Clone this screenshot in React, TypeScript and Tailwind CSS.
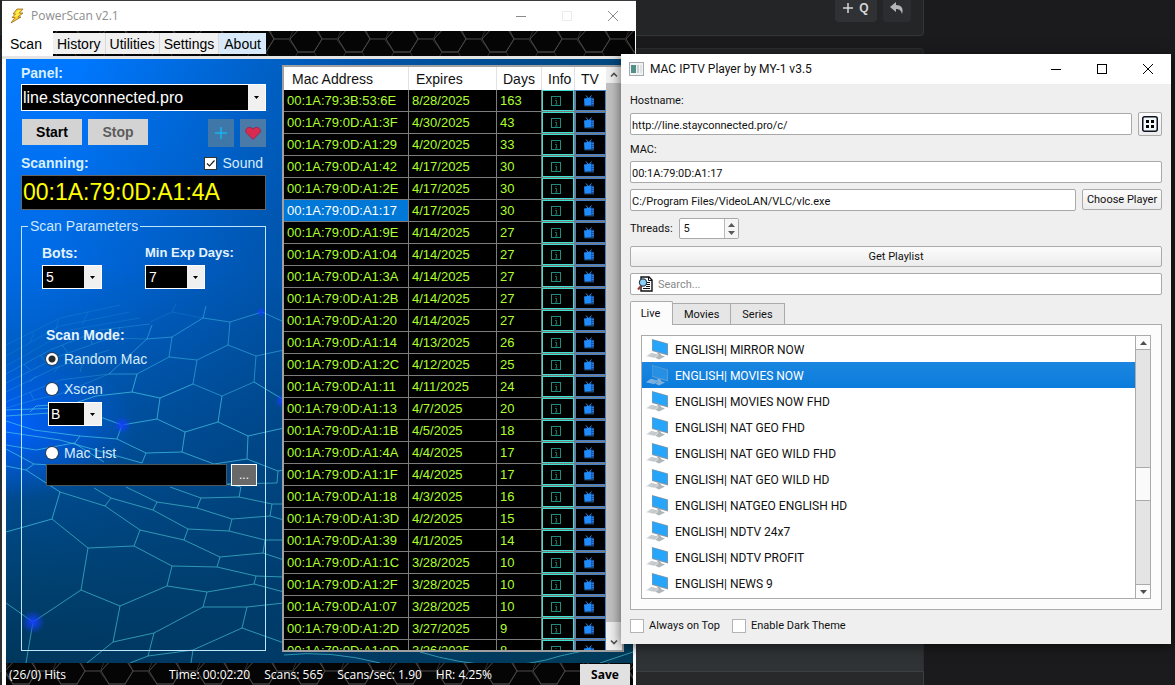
import { useId, useState } from 'react'
import type { ReactNode } from 'react'

interface Hit {
  mac: string
  expires: string
  days: number
}

const hits: Hit[] = [
  { mac: '00:1A:79:3B:53:6E', expires: '8/28/2025', days: 163 },
  { mac: '00:1A:79:0D:A1:3F', expires: '4/30/2025', days: 43 },
  { mac: '00:1A:79:0D:A1:29', expires: '4/20/2025', days: 33 },
  { mac: '00:1A:79:0D:A1:42', expires: '4/17/2025', days: 30 },
  { mac: '00:1A:79:0D:A1:2E', expires: '4/17/2025', days: 30 },
  { mac: '00:1A:79:0D:A1:17', expires: '4/17/2025', days: 30 },
  { mac: '00:1A:79:0D:A1:9E', expires: '4/14/2025', days: 27 },
  { mac: '00:1A:79:0D:A1:04', expires: '4/14/2025', days: 27 },
  { mac: '00:1A:79:0D:A1:3A', expires: '4/14/2025', days: 27 },
  { mac: '00:1A:79:0D:A1:2B', expires: '4/14/2025', days: 27 },
  { mac: '00:1A:79:0D:A1:20', expires: '4/14/2025', days: 27 },
  { mac: '00:1A:79:0D:A1:14', expires: '4/13/2025', days: 26 },
  { mac: '00:1A:79:0D:A1:2C', expires: '4/12/2025', days: 25 },
  { mac: '00:1A:79:0D:A1:11', expires: '4/11/2025', days: 24 },
  { mac: '00:1A:79:0D:A1:13', expires: '4/7/2025', days: 20 },
  { mac: '00:1A:79:0D:A1:1B', expires: '4/5/2025', days: 18 },
  { mac: '00:1A:79:0D:A1:4A', expires: '4/4/2025', days: 17 },
  { mac: '00:1A:79:0D:A1:1F', expires: '4/4/2025', days: 17 },
  { mac: '00:1A:79:0D:A1:18', expires: '4/3/2025', days: 16 },
  { mac: '00:1A:79:0D:A1:3D', expires: '4/2/2025', days: 15 },
  { mac: '00:1A:79:0D:A1:39', expires: '4/1/2025', days: 14 },
  { mac: '00:1A:79:0D:A1:1C', expires: '3/28/2025', days: 10 },
  { mac: '00:1A:79:0D:A1:2F', expires: '3/28/2025', days: 10 },
  { mac: '00:1A:79:0D:A1:07', expires: '3/28/2025', days: 10 },
  { mac: '00:1A:79:0D:A1:2D', expires: '3/27/2025', days: 9 },
  { mac: '00:1A:79:0D:A1:0D', expires: '3/26/2025', days: 8 },
]

const channels = [
  'MIRROR NOW',
  'MOVIES NOW',
  'MOVIES NOW FHD',
  'NAT GEO FHD',
  'NAT GEO WILD FHD',
  'NAT GEO WILD HD',
  'NATGEO ENGLISH HD',
  'NDTV 24x7',
  'NDTV PROFIT',
  'NEWS 9',
]

const scanTabs = ['Scan', 'History', 'Utilities', 'Settings', 'About']
const playerTabs = ['Live', 'Movies', 'Series']

/* ---------- drawings ---------- */

function Honeycomb() {
  const id = useId()
  return (
    <svg className="absolute inset-0 size-full" aria-hidden="true">
      <defs>
        <pattern id={id} width="48" height="42" patternUnits="userSpaceOnUse" x="-2" y="-12">
          <g fill="none" stroke="#4c4847" strokeWidth="1">
            <path d="M9 0L0 21L9 33H25L33 20L24 0" stroke="#2c2a2b" />
            <path d="M11 9L1 20L9 33H25L33 20L26 9" />
            <path d="M33 20H48" />
            <path d="M9 33L4 42M25 33L30 42" stroke="#2e2c2d" />
          </g>
        </pattern>
      </defs>
      <rect width="100%" height="100%" fill="#050505" />
      <rect width="100%" height="100%" fill={`url(#${id})`} />
    </svg>
  )
}

function Mesh() {
  return (
    <svg
      className="absolute inset-0 size-full"
      viewBox="6 59 627 604"
      preserveAspectRatio="xMinYMin slice"
      aria-hidden="true"
    >
      <defs>
        <radialGradient id="glow">
          <stop offset="0" stopColor="#1440ff" />
          <stop offset="1" stopColor="#1440ff" stopOpacity="0" />
        </radialGradient>
        <radialGradient id="beam">
          <stop offset="0" stopColor="#0060ff" />
          <stop offset="1" stopColor="#0060ff" stopOpacity="0" />
        </radialGradient>
      </defs>
      <ellipse cx="6" cy="425" rx="130" ry="75" fill="url(#beam)" />
      <g fill="none" stroke="#3fb6e6" strokeOpacity="0.18">
        <path d="M6 345L60 318L120 305M6 356L60 326L130 312M6 366L70 330L140 318M30 342L34 333M56 330L58 320M82 325L88 312M150 322L172 312L203 318M172 312L176 304" />
      </g>
      <g fill="none" stroke="#3fb6e6" strokeOpacity="0.3">
        <path d="M6 374L50 350L100 330L150 324M6 383L60 356L110 338L147 339M6 392L55 368L109 350M6 402L60 380L109 374M24 364L30 370M40 355L46 362M62 345L68 353M90 334L92 344M120 327L116 337M36 376L30 382M60 366L54 372M84 358L80 372M30 392L34 400L60 394L109 374M34 400L6 408" />
      </g>
      <g fill="none" stroke="#45c3ee" strokeOpacity="0.5">
        <path d="M203 318L230 322L228 345L256 356L254 382L222 396L193 384L197 360L228 345M197 360L169 357L172 337L203 318L206 306M230 322L262 312L284 322M256 356L284 350M147 339L172 337M109 374L147 339L152 325M109 374L137 374L169 357" />
      </g>
      <g fill="none" stroke="#46c6e4" strokeOpacity="0.7">
        <path d="M137 374L132 392L160 398L193 384M160 398L157 419L185 432L218 422L222 396M218 422L248 436L284 428M254 382L284 400M248 436L247 459M185 432L182 452M132 392L96 396L60 408L6 410M157 419L122 425L117 439L80 436L34 430L6 421M122 425L92 414L50 413L6 416M30 412L36 406L66 404M80 436L74 444M6 432L60 440L142 463L146 453L182 452L214 464L247 459L278 471L284 470M117 439L146 453M6 445L36 450L74 443L104 462M6 466L26 470L34 464L6 449M26 470L60 492L52 519L6 532M34 464L100 468L96 486" />
      </g>
      <g fill="none" stroke="#3fb4c8" strokeOpacity="0.75">
        <path d="M60 492L105 506L140 530L184 540L188 529L229 531L265 540L284 540M94 488L111 498L105 506M111 498L153 510L157 502L126 487M157 502L197 508L201 498L170 487M201 498L239 497L272 504L284 504M239 497L241 487L226 484L277 483L278 471M153 510L188 529M197 508L232 519L270 516L272 504M232 519L229 531M270 516L284 520M184 540L220 557L263 553L265 540M220 557L217 567L172 566L134 546L140 530M134 546L88 548L52 519M88 548L81 590L120 606L167 586L172 566M217 567L256 576L284 577M263 553L284 560M256 576L254 584L207 592L167 586M254 584L284 592M207 592L203 607L247 607L284 603M247 607L242 628L284 643M242 628L193 650L148 656L130 663M193 650L191 663M203 607L154 633L113 642L87 663M154 633L148 656M120 606L113 642M81 590L33 622L6 603M33 622L26 663" />
        <path d="M284 655Q330 650 380 663M420 652Q500 676 560 656L633 640M600 663L633 652" />
      </g>
      <circle cx="33" cy="622" r="12" fill="url(#glow)" />
      <circle cx="122" cy="425" r="9" fill="url(#glow)" />
      <circle cx="261" cy="312" r="5" fill="url(#glow)" />
      <circle cx="282" cy="401" r="7" fill="url(#glow)" />
    </svg>
  )
}

function BoltIcon() {
  return (
    <svg className="h-4 w-4" viewBox="0 0 16 16" aria-hidden="true">
      <path d="M8 1L14 1L10.500 5H14L9 9H12L2 15L6 9.500H3L6.500 6H4Z" fill="#ffc926" stroke="#8a5b10" strokeWidth="0.700" />
      <path d="M9 2H12L8.500 6H11L7 9.500L4.500 12.500L8 8.500H5L8 5.300H6Z" fill="#fff04a" />
    </svg>
  )
}

function DownArrow() {
  return (
    <svg className="h-[3px] w-[5px]" viewBox="0 0 5 3" aria-hidden="true">
      <path d="M0 0H5L2.500 3Z" fill="#000" />
    </svg>
  )
}

function InfoIcon() {
  return (
    <svg className="size-3" viewBox="0 0 12 12" fill="none" aria-hidden="true">
      <rect x="1.500" y="1.500" width="9" height="9" stroke="#1f8c7c" />
      <path d="M6 3V4M5 5.500H6.500V8.500M5 9H7.500" stroke="#22917f" strokeWidth="0.800" />
    </svg>
  )
}

function TvIcon() {
  return (
    <svg className="h-3 w-3" viewBox="0 0 12 12" fill="none" aria-hidden="true">
      <path d="M3 0.500L5 3M8.500 0.500L6.500 3" stroke="#2f8ff0" />
      <path d="M1 3.500L8 2.500V10L1.500 10.500Z" fill="#1e8cff" />
      <path d="M8 2.500L11 3V10L8 10Z" fill="#174f9c" />
      <path d="M8.500 4.500H11M8.500 6.500H11M8.500 8.500H11M1.500 10.800H11" stroke="#3a86e0" strokeWidth="0.800" />
    </svg>
  )
}

function MonitorIcon({ dim }: { dim: boolean }) {
  return (
    <svg className="h-6 w-6 shrink-0" viewBox="0 0 24 24" aria-hidden="true">
      <path d="M6 1L22 5.500V17.500L6 13Z" fill={dim ? '#5f9fd2' : '#8c979f'} />
      <path d="M6.500 1.800L21.200 6V16.200L6.500 12Z" fill={dim ? '#2590e4' : '#27a5fb'} />
      <path d="M11 14.500L15 15.500V17L19 18.500L13 21.500L9 19.500L12 18Z" fill={dim ? '#7fb0da' : '#b0b5b8'} />
      <path d="M5 14.800L13 16.800L8 20L0 18.200Z" fill={dim ? '#8dbbe2' : '#dadddf'} />
      <path d="M2.500 17.500L9.500 19M4 16.500L11 18.100M5.300 15.400L12 17.200" stroke={dim ? '#5a9bd5' : '#a8adb1'} strokeWidth="0.500" />
    </svg>
  )
}

function SearchDocIcon() {
  return (
    <svg className="h-4 w-4 shrink-0" viewBox="0 0 16 16" fill="none" aria-hidden="true">
      <path d="M4 1H12L15 4V15H4Z" fill="#fff" stroke="#111" strokeWidth="1.400" />
      <path d="M11.500 1V4.500H15" stroke="#111" />
      <path d="M9 6.500H13M9 8.500H13M9 10.500H13M6 12.500H13" stroke="#111" />
      <path d="M4 10L1 13.500" stroke="#9b3b32" strokeWidth="2" />
      <circle cx="6" cy="6.500" r="3.600" fill="#8fd0f5" stroke="#28455a" strokeWidth="1.200" />
    </svg>
  )
}

/* ---------- shared controls ---------- */

interface ComboProps {
  id: string
  value: string
  className: string
  textClass?: string
}

function Combo({ id, value, className, textClass = 'pl-[3px] text-sm' }: ComboProps) {
  return (
    <div className={`flex border border-white bg-black text-white ${className}`}>
      <select id={id} defaultValue={value} className={`min-w-0 flex-1 appearance-none bg-black outline-none ${textClass}`}>
        <option>{value}</option>
      </select>
      <span className="flex w-[17px] items-center justify-center bg-[#f0f0f0]">
        <DownArrow />
      </span>
    </div>
  )
}

interface RadioProps {
  label: string
  className: string
  checked: boolean
  onSelect: () => void
}

function Radio({ label, className, checked, onSelect }: RadioProps) {
  return (
    <label className={`flex h-4 items-center gap-[6px] text-sm text-[#d8ecfb] ${className}`}>
      <input
        type="radio"
        name="scan-mode"
        checked={checked}
        onChange={onSelect}
        className="size-3 appearance-none rounded-full bg-white ring-1 ring-[#2b3f55] checked:bg-[radial-gradient(circle,#2b2b2b_3px,#fff_4px)]"
      />
      {label}
    </label>
  )
}

function WindowButtons({ stroke, boxStroke }: { stroke: string; boxStroke: string }) {
  return (
    <div className="ml-auto flex items-center gap-[34px]">
      <button type="button" aria-label="Minimize">
        <svg className="size-3" viewBox="0 0 12 12" stroke={stroke}>
          <path d="M1 6.500H11" />
        </svg>
      </button>
      <button type="button" aria-label="Maximize">
        <svg className="size-3" viewBox="0 0 12 12" fill="none" stroke={boxStroke}>
          <rect x="1.500" y="1.500" width="9" height="9" />
        </svg>
      </button>
      <button type="button" aria-label="Close">
        <svg className="size-3" viewBox="0 0 12 12" stroke={stroke}>
          <path d="M1 1L11 11M11 1L1 11" />
        </svg>
      </button>
    </div>
  )
}

/* ---------- PowerScan ---------- */

function ScanPanel() {
  const [mode, setMode] = useState('Random Mac')

  return (
    <form className="flex w-[245px] shrink-0 flex-col pt-[6px] pb-3" onSubmit={(e) => e.preventDefault()}>
      <label htmlFor="panel" className="text-sm leading-4 font-bold text-[#d8efff]">
        Panel:
      </label>
      <Combo id="panel" value="line.stayconnected.pro" className="mt-[3px] h-[27px]" textClass="pl-px text-base" />

      <div className="mt-2 flex items-start gap-[6px] pl-px">
        <button type="button" className="h-[26px] w-[60px] bg-[#d3d3d3] text-sm font-bold text-black">
          Start
        </button>
        <button type="button" className="h-[26px] w-[60px] bg-[#d3d3d3] text-sm font-bold text-[#5c5c5c]">
          Stop
        </button>
        <button type="button" aria-label="Add panel" className="ml-auto flex h-7 w-[26px] items-center justify-center bg-[#3f77a8]">
          <svg className="size-3" viewBox="0 0 12 12" stroke="#16b4f0" strokeWidth="1.500">
            <path d="M6 0V12M0 6H12" />
          </svg>
        </button>
        <button type="button" aria-label="Favorite" className="flex h-7 w-[26px] items-center justify-center bg-[#4a7aa8]">
          <svg className="size-4" viewBox="0 0 16 16">
            <path d="M8 14.500L1 7.500C-0.500 4 3.500 0 8 4C12.500 0 16.500 4 15 7.500Z" fill="#d92a50" stroke="#8d2f55" />
          </svg>
        </button>
      </div>

      <div className="mt-2 flex h-4 items-center justify-between pr-[3px]">
        <label htmlFor="current" className="text-sm leading-4 font-bold text-[#d8efff]">
          Scanning:
        </label>
        <label className="flex items-center gap-[6px] text-sm leading-4 text-[#d8ecfb]">
          <span className="relative size-[13px]">
            <input type="checkbox" defaultChecked className="peer block size-full appearance-none border border-[#333] bg-white" />
            <svg className="pointer-events-none absolute inset-0 hidden peer-checked:block" viewBox="0 0 13 13" fill="none" stroke="#222">
              <path d="M3 6.500L5.500 9L10.500 3.500" strokeWidth="1.200" />
            </svg>
          </span>
          Sound
        </label>
      </div>
      <input
        id="current"
        readOnly
        value="00:1A:79:0D:A1:4A"
        className="mt-1 h-[35px] border border-[#646464] bg-black pl-px text-[23px] text-[#ffff00] outline-none"
      />

      <fieldset className="mt-2 min-w-0 flex-1 border border-[#bfe6f8] text-sm">
        <legend className="ml-[6px] px-[2px] leading-4 text-[#cfe8fa]">Scan Parameters</legend>
        <div className="flex pt-[11px] pl-5">
          <div className="w-[103px]">
            <label htmlFor="bots" className="block leading-4 font-bold text-[#e4f3fd]">
              Bots:
            </label>
            <Combo id="bots" value="5" className="mt-1 h-6 w-[60px]" />
          </div>
          <div>
            <label htmlFor="min-days" className="block text-[13px] leading-4 font-bold text-[#e4f3fd]">
              Min Exp Days:
            </label>
            <Combo id="min-days" value="7" className="mt-1 h-6 w-[60px]" />
          </div>
        </div>
        <div className="mt-[38px] pr-2 pl-6">
          <p className="leading-4 font-bold text-[#e4f3fd]">Scan Mode:</p>
          <Radio label="Random Mac" className="mt-2" checked={mode === 'Random Mac'} onSelect={() => setMode('Random Mac')} />
          <Radio label="Xscan" className="mt-[14px]" checked={mode === 'Xscan'} onSelect={() => setMode('Xscan')} />
          <Combo id="xscan-type" value="B" className="mt-[5px] ml-[2px] h-6 w-[54px]" textClass="pl-[2px] text-sm" />
          <Radio label="Mac List" className="mt-[19px]" checked={mode === 'Mac List'} onSelect={() => setMode('Mac List')} />
          <div className="mt-[3px] flex items-center gap-1">
            <input aria-label="Mac list file" className="h-[22px] min-w-0 flex-1 border border-[#4c5a60] bg-black text-white" />
            <button type="button" className="h-[22px] w-[26px] border border-white bg-[#696969] text-xs text-white">
              ...
            </button>
          </div>
        </div>
      </fieldset>
    </form>
  )
}

function HitsTable() {
  const [selected, setSelected] = useState(5)

  return (
    <div className="mt-[6px] mb-[11px] ml-4 flex min-w-0 flex-1 overflow-hidden border-2 border-[#a0a0a0] bg-black">
      <div className="min-w-0 flex-1 overflow-hidden">
        <table className="w-full table-fixed border-separate border-spacing-0 text-left text-[13px] text-[#adff2f]">
          <colgroup>
            <col />
            <col className="w-[88px]" />
            <col className="w-[45px]" />
            <col className="w-[33px]" />
            <col className="w-[31px]" />
          </colgroup>
          <thead>
            <tr className="h-[23px] bg-white text-sm text-[#111]">
              <th className="border-r border-[#e2e2e2] p-0 pl-2 font-normal">Mac Address</th>
              <th className="border-r border-[#e2e2e2] p-0 pl-[7px] font-normal">Expires</th>
              <th className="border-r border-[#e2e2e2] p-0 pl-[6px] font-normal">Days</th>
              <th className="border-r border-[#e2e2e2] p-0 pl-[6px] font-normal">Info</th>
              <th className="p-0 pl-[6px] font-normal">TV</th>
            </tr>
          </thead>
          <tbody>
            {hits.map((hit, i) => (
              <tr key={hit.mac} className="h-[22px]" onClick={() => setSelected(i)}>
                <td className={`border-r border-b border-[#7c7c7c] p-0 pl-[3px] ${i === selected ? 'bg-[#0078d7] text-white' : ''}`}>
                  {hit.mac}
                </td>
                <td className="border-r border-b border-[#7c7c7c] p-0 pl-[3px]">{hit.expires}</td>
                <td className="border-r border-b border-[#7c7c7c] p-0 pl-[3px]">{hit.days}</td>
                <td className="border-r border-b border-[#7c7c7c] p-0">
                  <button type="button" aria-label="Info" className="flex h-[21px] w-full items-center justify-center border border-[#40e0d0] pr-1">
                    <InfoIcon />
                  </button>
                </td>
                <td className="border-b border-[#7c7c7c] p-0">
                  <button type="button" aria-label="Watch" className="flex h-[21px] w-full items-center justify-center border border-[#4682c8] pr-1">
                    <TvIcon />
                  </button>
                </td>
              </tr>
            ))}
          </tbody>
        </table>
      </div>
      <div className="flex w-4 flex-col bg-[#c1c1c1]">
        <button type="button" aria-label="Scroll up" className="flex h-4 items-center justify-center bg-[#f0f0f0]">
          <svg className="size-2" viewBox="0 0 8 8" fill="none" stroke="#505050" strokeWidth="1.600">
            <path d="M1 5.500L4 2.500L7 5.500" />
          </svg>
        </button>
        <button type="button" aria-label="Scroll down" className="mt-auto flex h-7 items-end justify-center bg-[#f0f0f0] pb-1">
          <svg className="size-2" viewBox="0 0 8 8" fill="none" stroke="#505050" strokeWidth="1.600">
            <path d="M1 2.500L4 5.500L7 2.500" />
          </svg>
        </button>
      </div>
    </div>
  )
}

function PowerScanWindow() {
  const [tab, setTab] = useState('Scan')

  return (
    <section className="absolute inset-y-0 right-[539px] left-[2px] flex min-w-[634px] flex-col border-t border-[#3c3a3c] bg-white font-['Liberation_Sans',Arial,sans-serif]">
      <header className="flex h-[30px] shrink-0 items-center gap-[6px] pr-[17px] pl-[7px]">
        <BoltIcon />
        <h1 className="font-['Open_Sans',sans-serif] text-xs text-[#8d8d8d]">PowerScan v2.1</h1>
        <WindowButtons stroke="#8a8a8a" boxStroke="#ececec" />
      </header>

      <nav className="relative mx-px flex h-[25px] shrink-0 items-end text-sm leading-4 text-black">
        <Honeycomb />
        {scanTabs.map((name) => (
          <button
            key={name}
            type="button"
            onClick={() => setTab(name)}
            className={
              name === tab
                ? 'relative h-full w-[50px] bg-white pr-1'
                : name === 'About'
                  ? 'relative mb-[2px] h-[21px] bg-[#d8eaf9] px-[5px]'
                  : 'relative mb-[2px] h-[21px] border-r border-[#d9d9d9] bg-[#f0f0f0] px-1'
            }
          >
            {name}
          </button>
        ))}
      </nav>
      <div className="h-[3px] shrink-0 bg-[#e4e4e4]" />

      <div className="relative mr-[3px] ml-1 flex min-h-0 flex-1 flex-col overflow-hidden bg-[linear-gradient(to_bottom,#0078ff_0%,#006ae4_35%,#0054aa_60%,#004274_85%,#00365a_100%)]">
        <div className="absolute inset-0 bg-[linear-gradient(100deg,transparent_10%,rgba(0,60,110,0.6)_50%,rgba(0,60,90,0.9)_100%)]" />
        <Mesh />
        <div className="relative flex min-h-0 flex-1 pr-[9px] pl-[15px]">
          <ScanPanel />
          <HitsTable />
        </div>
      </div>

      <footer className="relative mr-[3px] ml-1 flex h-[22px] shrink-0 items-center pl-[3px] font-['Open_Sans',sans-serif] text-xs text-white">
        <Honeycomb />
        <p className="relative w-40 pt-[2px] leading-4">(26/0) Hits</p>
        <p className="relative flex gap-[14px] pt-[2px] leading-4">
          <span>Time: 00:02:20</span>
          <span>Scans: 565</span>
          <span>Scans/sec: 1.90</span>
          <span>HR: 4.25%</span>
        </p>
        <button type="button" className="relative mt-px mr-[3px] ml-auto h-[21px] w-[50px] bg-[#e1e1e1] text-xs font-bold text-black">
          Save
        </button>
      </footer>
    </section>
  )
}

/* ---------- MAC IPTV Player ---------- */

function TextField({ id, value, label }: { id: string; value: string; label?: string }) {
  return (
    <input
      id={id}
      defaultValue={value}
      aria-label={label}
      className="h-[22px] w-full min-w-0 flex-1 rounded-[2px] border border-[#a9a9a9] bg-white pt-[2px] pl-px outline-none"
    />
  )
}

function PushButton({ children, className }: { children: ReactNode; className: string }) {
  return (
    <button
      type="button"
      className={`rounded-[2px] border border-[#ababab] bg-linear-to-b from-[#fcfcfc] to-[#ececec] ${className}`}
    >
      {children}
    </button>
  )
}

function CheckOption({ label }: { label: string }) {
  return (
    <label className="flex h-4 items-center gap-[5px]">
      <input type="checkbox" className="size-[14px] appearance-none border border-[#b4b4b4] bg-white checked:bg-[#0078d7]" />
      {label}
    </label>
  )
}

function ChannelList() {
  const [current, setCurrent] = useState(1)

  return (
    <div className="flex border border-[#ababab] bg-white text-xs">
      <ul className="min-w-0 flex-1 pb-[2px]">
        {channels.map((name, i) => (
          <li key={name}>
            <button
              type="button"
              onClick={() => setCurrent(i)}
              className={`flex h-[26px] w-full items-center gap-[5px] pt-[2px] pl-1 ${i === current ? 'bg-linear-to-b from-[#1a86e0] to-[#0a7cdc] text-white' : 'text-[#111]'}`}
            >
              <MonitorIcon dim={i === current} />
              ENGLISH| {name}
            </button>
          </li>
        ))}
      </ul>
      <div className="flex w-[15px] flex-col border-l border-[#ababab] bg-[#e4e4e4]">
        <button type="button" aria-label="Scroll up" className="flex h-[14px] items-center justify-center border-b border-[#ababab] bg-[#fbfbfb]">
          <svg className="h-1 w-[7px]" viewBox="0 0 7 4">
            <path d="M3.500 0L7 4H0Z" fill="#4d4d4d" />
          </svg>
        </button>
        <span className="grow-[119]" />
        <span className="h-[34px] border-y border-[#ababab] bg-[#fafafa]" />
        <span className="grow-[84]" />
        <button type="button" aria-label="Scroll down" className="flex h-[14px] items-center justify-center border-t border-[#ababab] bg-[#fbfbfb]">
          <svg className="h-1 w-[7px]" viewBox="0 0 7 4">
            <path d="M0 0H7L3.500 4Z" fill="#4d4d4d" />
          </svg>
        </button>
      </div>
    </div>
  )
}

function PlayerWindow() {
  const [tab, setTab] = useState('Live')

  return (
    <section className="absolute top-[54px] right-1 left-[621px] min-w-[400px] bg-[#efefef] font-[Roboto,'Open_Sans',sans-serif] text-[11px] text-[#111] shadow-[0_2px_12px_rgba(0,0,0,0.6)]">
      <header className="flex h-[30px] items-center gap-[6px] bg-white pr-[17px] pl-2">
        <svg className="h-[14px] w-[15px]" viewBox="0 0 15 14" aria-hidden="true">
          <rect x="0.500" y="0.500" width="14" height="13" fill="#f2f4f4" stroke="#a4abb0" />
          <rect x="2" y="3" width="5" height="8" fill="#4f9089" />
          <rect x="8" y="3" width="2" height="8" fill="#c8cfd1" />
          <rect x="11" y="3" width="2" height="8" fill="#dfe3e4" />
        </svg>
        <h1 className="text-xs">MAC IPTV Player by MY-1 v3.5</h1>
        <WindowButtons stroke="#000" boxStroke="#000" />
      </header>

      <form className="flex flex-col px-[9px] pt-[9px] pb-[10px]" onSubmit={(e) => e.preventDefault()}>
        <label htmlFor="hostname" className="leading-4">
          Hostname:
        </label>
        <div className="mt-[3px] flex items-center gap-[6px]">
          <TextField id="hostname" value="http://line.stayconnected.pro/c/" />
          <PushButton className="flex size-6 items-center justify-center">
            <svg className="size-4" viewBox="0 0 16 16" role="img" aria-label="Portals">
              <rect x="0.750" y="0.750" width="14.500" height="14.500" rx="2" fill="#f4f8fb" stroke="#0c1220" strokeWidth="1.500" />
              <path d="M4 4H7V7H4ZM9 4H12V7H9ZM4 9H7V12H4ZM9 9H12V12H9Z" fill="#000" />
            </svg>
          </PushButton>
        </div>

        <label htmlFor="mac" className="mt-[6px] leading-4">
          MAC:
        </label>
        <div className="mt-[3px] flex">
          <TextField id="mac" value="00:1A:79:0D:A1:17" />
        </div>
        <div className="mt-[6px] flex gap-[6px]">
          <TextField id="player-path" value="C:/Program Files/VideoLAN/VLC/vlc.exe" label="Player path" />
          <PushButton className="h-[21px] w-20 pt-[2px]">Choose Player</PushButton>
        </div>

        <div className="mt-[7px] flex h-[21px] items-center gap-[6px]">
          <label htmlFor="threads" className="pt-[2px]">
            Threads:
          </label>
          <div className="flex h-full w-[60px] overflow-hidden rounded-[2px] border border-[#a9a9a9] bg-white">
            <input id="threads" defaultValue="5" inputMode="numeric" className="min-w-0 flex-1 pt-[2px] pl-1 outline-none" />
            <span className="flex w-[14px] flex-col items-center justify-center gap-1 border-l border-[#b9b9b9] bg-[#f6f6f6]">
              <button type="button" aria-label="More threads" className="block">
                <svg className="h-1 w-[7px]" viewBox="0 0 7 4">
                  <path d="M3.500 0L7 4H0Z" fill="#5a5a5a" />
                </svg>
              </button>
              <button type="button" aria-label="Fewer threads" className="block">
                <svg className="h-1 w-[7px]" viewBox="0 0 7 4">
                  <path d="M0 0H7L3.500 4Z" fill="#5a5a5a" />
                </svg>
              </button>
            </span>
          </div>
        </div>

        <PushButton className="mt-[7px] h-[21px] pt-[2px]">Get Playlist</PushButton>

        <div className="mt-[6px] flex h-[22px] items-center gap-[5px] rounded-[2px] border border-[#a9a9a9] bg-white pl-[6px]">
          <SearchDocIcon />
          <input aria-label="Search" placeholder="Search..." className="min-w-0 flex-1 pt-[2px] outline-none placeholder:text-[#8a8a8a]" />
        </div>

        <div className="mt-[6px] flex h-[23px] items-end">
          {playerTabs.map((name) => (
            <button
              key={name}
              type="button"
              onClick={() => setTab(name)}
              className={
                name === tab
                  ? 'relative -mb-px h-6 w-[43px] shrink-0 rounded-t-[2px] border border-b-0 border-[#ababab] bg-[#fcfcfc] pt-[2px] pr-[2px]'
                  : 'h-[21px] border border-b-0 border-l-0 border-[#ababab] bg-[#e6e6e6] px-[11px] pt-[2px]'
              }
            >
              {name}
            </button>
          ))}
        </div>
        <div className="border border-[#ababab] bg-[#fcfcfc] p-[10px]">
          <ChannelList />
        </div>

        <div className="mt-2 flex gap-3">
          <CheckOption label="Always on Top" />
          <CheckOption label="Enable Dark Theme" />
        </div>
      </form>
    </section>
  )
}

/* ---------- desktop ---------- */

export default function App() {
  return (
    <main className="relative h-screen min-h-[685px] overflow-hidden bg-[#1b1b1d]">
      <div className="flex h-full w-[924px] flex-col">
        <div className="flex h-9 items-start justify-end gap-[6px] rounded-b border-r border-b border-[#353638] bg-[#242527] pr-3">
          <button type="button" className="flex h-[22px] w-[42px] items-center justify-center gap-[6px] rounded-b bg-[#303134] pb-[6px] font-['Liberation_Sans',sans-serif] text-xs font-bold text-[#d6d6d6]">
            <svg className="size-[10px]" viewBox="0 0 10 10" stroke="#d6d6d6" strokeWidth="1.500" aria-hidden="true">
              <path d="M5 0V10M0 5H10" />
            </svg>
            Q
          </button>
          <button type="button" aria-label="Reply" className="flex h-[22px] w-[28px] items-center justify-center rounded-b bg-[#2c2d30] pb-[6px]">
            <svg className="h-3 w-[14px]" viewBox="0 0 14 12">
              <path d="M6 0L0 5L6 10V7C9 7 11 8 12 12C14 6 11 3 6 3Z" fill="#b5b5b5" />
            </svg>
          </button>
        </div>
        <div className="mt-3 flex-1 rounded-t border-t border-r border-[#2c2d2f] bg-linear-to-b from-[#242527] to-[#2f3335]" />
        <div className="h-[14px] border-t border-r border-[#3c3f41] bg-[#28292b]" />
      </div>
      <PowerScanWindow />
      <PlayerWindow />
    </main>
  )
}
